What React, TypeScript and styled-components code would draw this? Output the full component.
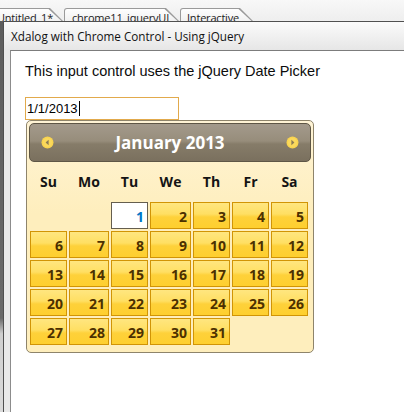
import React from "react";
import styled, { createGlobalStyle } from "styled-components";

const GlobalStyle = createGlobalStyle`
  html, body { margin: 0; padding: 0; }
  body { background: #f1f1f1; width: 404px; height: 412px; overflow: hidden; }
`;

const Page = styled.div`
  width: 404px;
  height: 412px;
  display: flex;
  flex-direction: column;
  overflow: hidden;
`;

const TabStrip = styled.div`
  height: 21px;
  flex: none;
  display: flex;
  align-items: flex-start;
  padding-top: 8px;
  box-sizing: border-box;
  gap: 1px;
  overflow: hidden;
  background: linear-gradient(#f8f8f8, #eeeeee);
`;

const Tab = styled.div<{ $w: number; $pl: number; $ml?: number }>`
  position: relative;
  box-sizing: border-box;
  flex: none;
  width: ${(p) => p.$w}px;
  height: 13px;
  margin-left: ${(p) => p.$ml ?? 0}px;
  padding: 2px 0 0 ${(p) => p.$pl}px;
  font: 11px/16px "Open Sans", sans-serif;
  letter-spacing: -0.2px;
  color: #1c1c1c;
  white-space: nowrap;
  &::before {
    content: "";
    position: absolute;
    inset: 0;
    background: #9a9a9a;
    clip-path: polygon(0 0, calc(100% - 13px) 0, 100% 100%, 0 100%);
    border-top-left-radius: 3px;
  }
  &::after {
    content: "";
    position: absolute;
    left: 1px;
    top: 1px;
    right: 1.5px;
    bottom: 0;
    background: linear-gradient(#fefefe, #f1f1f1);
    clip-path: polygon(0 0, calc(100% - 13px) 0, 100% 100%, 0 100%);
    border-top-left-radius: 2px;
  }
`;

const TabLabel = styled.span`
  position: relative;
  z-index: 1;
`;

const Desk = styled.div`
  flex: 1;
  display: flex;
  min-height: 0;
`;

const SideStrip = styled.div`
  width: 3px;
  flex: none;
  background: linear-gradient(#5d5d5d 0, #6a6a6a 76%, #cfcfcf 80%, #dadada 100%);
`;

const Dialog = styled.div`
  flex: 1;
  display: flex;
  flex-direction: column;
  border-top: 1px solid #505050;
  border-left: 1px solid #505050;
  background: #e9e9e9;
`;

const TitleBar = styled.div`
  height: 28px;
  flex: none;
  box-sizing: border-box;
  padding-left: 7px;
  display: flex;
  align-items: center;
  font: 11.7px "Open Sans", sans-serif;
  color: #111;
  background: linear-gradient(#fbfbfb, #e6e6e6);
`;

const Frame = styled.div`
  flex: 1;
  display: flex;
  padding-left: 6px;
`;

const Content = styled.div`
  flex: 1;
  background: #ffffff;
  border-top: 1px solid #7c7c7c;
  border-left: 1px solid #8c8c8c;
  padding: 12px 0 0 14px;
`;

const Description = styled.div`
  font: 14.5px/17px "Liberation Sans", Arial, sans-serif;
  color: #0c0c0c;
`;

const DateInput = styled.div`
  margin-top: 17px;
  width: 154px;
  height: 23px;
  box-sizing: border-box;
  border: 1px solid #e2aa4c;
  padding-left: 1px;
  display: flex;
  align-items: center;
  font: 13px "Liberation Sans", Arial, sans-serif;
  color: #000;
`;

const Caret = styled.span`
  display: inline-block;
  width: 1px;
  height: 15px;
  margin-left: 1px;
  background: #000;
`;

const Picker = styled.div`
  margin-left: 1px;
  width: 288px;
  box-sizing: border-box;
  border: 1px solid #8e846b;
  border-radius: 5px;
  padding: 2px;
  background: linear-gradient(#fff4d6, #feeebd 40%);
`;

const Header = styled.div`
  height: 39px;
  box-sizing: border-box;
  border: 1px solid #5e5646;
  border-radius: 5px;
  padding: 0 11px;
  display: flex;
  align-items: center;
  justify-content: space-between;
  background: linear-gradient(#a39a8c 0%, #978d7b 46%, #867c69 54%, #7a705e 100%);
  color: #ffffff;
`;

const MonthTitle = styled.div`
  font: 700 17px "Open Sans", sans-serif;
  color: #ffffff;
`;

const Grid = styled.div`
  display: grid;
  grid-template-columns: 37px 40px 37px 41px 37px 37px 37px;
  grid-template-rows: 38px repeat(5, 27px);
  column-gap: 2px;
  row-gap: 2px;
  margin: 0 0 5px 1px;
`;

const DayName = styled.div`
  display: flex;
  align-items: center;
  justify-content: center;
  font: 700 14px "Open Sans", sans-serif;
  color: #141414;
`;

const Cell = styled.div<{ $active?: boolean }>`
  box-sizing: border-box;
  display: flex;
  align-items: center;
  justify-content: flex-end;
  padding: 2px 3px 0 0;
  font: 700 14px "Open Sans", sans-serif;
  border: 1px solid ${(p) => (p.$active ? "#655e4e" : "#d19405")};
  color: ${(p) => (p.$active ? "#0074c7" : "#4c3000")};
  background: ${(p) =>
    p.$active
      ? "#ffffff"
      : "linear-gradient(#ffe680 0%, #ffdf63 44%, #fed13a 56%, #fecf2f 100%)"};
`;

const Blank = styled.div``;

function NavIcon({ dir }: { dir: "prev" | "next" }) {
  const pts = dir === "prev" ? "7.6,3.8 4.6,6.5 7.6,9.2" : "5.4,3.8 8.4,6.5 5.4,9.2";
  return (
    <svg width="13" height="13" viewBox="0 0 13 13">
      <circle cx="6.5" cy="6.5" r="6" fill="#f9d44f" />
      <circle cx="6.5" cy="6.5" r="4.6" fill="#fbd95c" />
      <polygon points={pts} fill="#8c7d56" />
    </svg>
  );
}

const dayNames = ["Su", "Mo", "Tu", "We", "Th", "Fr", "Sa"];
const days = Array.from({ length: 31 }, (_, i) => i + 1);

export default function App() {
  return (
    <Page>
      <GlobalStyle />
      <TabStrip>
        <Tab $w={69} $pl={3} $ml={-6}>
          <TabLabel>Untitled_1*</TabLabel>
        </Tab>
        <Tab $w={115} $pl={8}>
          <TabLabel>chrome11_jqueryUI</TabLabel>
        </Tab>
        <Tab $w={73} $pl={7}>
          <TabLabel>Interactive</TabLabel>
        </Tab>
      </TabStrip>
      <Desk>
        <SideStrip />
        <Dialog>
          <TitleBar>Xdalog with Chrome Control - Using jQuery</TitleBar>
          <Frame>
            <Content>
              <Description>This input control uses the jQuery Date Picker</Description>
              <DateInput>
                1/1/2013
                <Caret />
              </DateInput>
              <Picker>
                <Header>
                  <NavIcon dir="prev" />
                  <MonthTitle>January 2013</MonthTitle>
                  <NavIcon dir="next" />
                </Header>
                <Grid>
                  {dayNames.map((d) => (
                    <DayName key={d}>{d}</DayName>
                  ))}
                  <Blank />
                  <Blank />
                  {days.map((d) => (
                    <Cell key={d} $active={d === 1}>
                      {d}
                    </Cell>
                  ))}
                </Grid>
              </Picker>
            </Content>
          </Frame>
        </Dialog>
      </Desk>
    </Page>
  );
}
